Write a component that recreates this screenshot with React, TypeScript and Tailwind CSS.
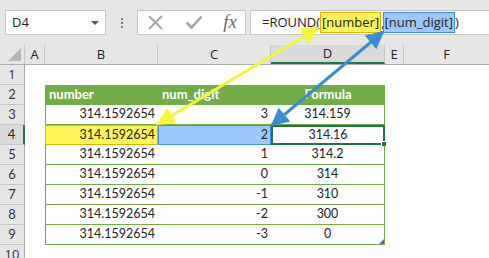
import React from 'react';

const rows = [
  { n: 3, b: '314.1592654', c: '3', d: '314.159' },
  { n: 4, b: '314.1592654', c: '2', d: '314.16' },
  { n: 5, b: '314.1592654', c: '1', d: '314.2' },
  { n: 6, b: '314.1592654', c: '0', d: '314' },
  { n: 7, b: '314.1592654', c: '-1', d: '310' },
  { n: 8, b: '314.1592654', c: '-2', d: '300' },
  { n: 9, b: '314.1592654', c: '-3', d: '0' },
];

const cols = [
  { label: 'A', w: 'w-[20px]' },
  { label: 'B', w: 'w-[113px]' },
  { label: 'C', w: 'w-[113px]' },
  { label: 'D', w: 'w-[114px]' },
  { label: 'E', w: 'w-[19px]' },
];

const RowHead: React.FC<{ n: number; active?: boolean }> = ({ n, active }) => (
  <div
    className={
      active
        ? 'w-[25px] h-full shrink-0 flex items-center justify-center bg-[#dadada] border-b border-[#c6c6c6] border-r-2 border-r-[#217346] text-[#222] text-[13px]'
        : 'w-[25px] h-full shrink-0 flex items-center justify-center bg-[#e6e6e6] border-b border-[#c6c6c6] border-r border-r-[#ababab] text-[#333] text-[13px]'
    }
  >
    {n}
  </div>
);

const App: React.FC = () => {
  return (
    <div className="relative w-[489px] h-[258px] overflow-hidden bg-white font-['Open_Sans'] text-[#222]">
      {/* formula bar */}
      <div className="h-[45px] bg-[#e6e6e6] flex items-start pt-[10px]">
        <div className="ml-[5px] w-[101px] h-[25px] bg-white border border-[#c6c6c6] flex items-center justify-between pl-[6px] pr-[6px] text-[13px]">
          <span>D4</span>
          <span className="w-0 h-0 border-l-[4px] border-r-[4px] border-t-[4px] border-l-transparent border-r-transparent border-t-[#555]" />
        </div>
        <div className="w-[31px] h-[25px] flex flex-col items-center justify-center gap-[2px]">
          <span className="w-[2px] h-[2px] bg-[#777]" />
          <span className="w-[2px] h-[2px] bg-[#777]" />
          <span className="w-[2px] h-[2px] bg-[#777]" />
        </div>
        <div className="w-[109px] h-[25px] bg-white border border-[#c6c6c6] flex items-center justify-between pl-[9px] pr-[8px]">
          <svg width="17" height="17" viewBox="0 0 17 17">
            <path d="M2 2 L15 15 M15 2 L2 15" stroke="#a6a6a6" strokeWidth="2" fill="none" />
          </svg>
          <svg width="18" height="15" viewBox="0 0 18 15">
            <path d="M1.5 7.5 L6.5 12.5 L16.5 1.5" stroke="#a6a6a6" strokeWidth="2.6" fill="none" />
          </svg>
          <span className="font-['Liberation_Serif'] italic text-[19px] leading-none text-[#6b6b6b] -mt-[3px]">fx</span>
        </div>
        <div className="ml-[4px] flex-1 h-[25px] bg-white border border-[#c6c6c6] border-r-0 flex items-center pl-[11px] text-[13px] whitespace-nowrap">
          <span>=ROUND(</span>
          <span className="h-[21px] flex items-center px-[1px] bg-[#fff35c] border border-[#e0b400]">[number]</span>
          <span className="-mr-[2px]">,</span>
          <span className="h-[21px] flex items-center px-[1px] bg-[#9ec8f8] border border-[#3f8fe8]">[num_digit]</span>
          <span>)</span>
        </div>
      </div>

      {/* column headers */}
      <div className="h-[20px] flex bg-[#e6e6e6] border-b border-[#ababab] text-[13px]">
        <div className="w-[25px] shrink-0 h-full relative border-r border-[#c6c6c6]">
          <span className="absolute right-[3px] bottom-[3px] w-0 h-0 border-b-[13px] border-l-[13px] border-l-transparent border-b-[#b5b5b5]" />
        </div>
        {cols.map((c) => (
          <div
            key={c.label}
            className={
              c.label === 'D'
                ? `${c.w} shrink-0 h-full flex items-center justify-center border-r border-[#c6c6c6] border-b-2 border-b-[#217346] bg-[#dadada]`
                : `${c.w} shrink-0 h-full flex items-center justify-center border-r border-[#c6c6c6]`
            }
          >
            {c.label}
          </div>
        ))}
        <div className="flex-1 h-full flex items-center justify-center">F</div>
      </div>

      {/* row 1 */}
      <div className="h-[20px] flex">
        <RowHead n={1} />
      </div>

      {/* row 2: table header */}
      <div className="h-[20px] flex font-['Lato'] text-[13px]">
        <RowHead n={2} />
        <div className="w-[20px] shrink-0" />
        <div className="w-[340px] shrink-0 h-full bg-[#70ad47] text-white font-bold flex items-center">
          <div className="w-[113px] pl-[4px]">number</div>
          <div className="w-[113px] pl-[4px]">num_digit</div>
          <div className="w-[114px] text-center">Formula</div>
        </div>
      </div>

      {/* data rows */}
      {rows.map((r) => {
        const sel = r.n === 4;
        return (
          <div key={r.n} className="h-[20px] flex font-['Lato'] text-[12.5px]">
            <RowHead n={r.n} active={sel} />
            <div className="w-[20px] shrink-0" />
            {sel ? (
              <>
                <div className="w-[113px] shrink-0 h-full bg-[#fff35c] border border-[#e0b400] flex items-center justify-end pr-[2px]">
                  {r.b}
                </div>
                <div className="w-[113px] shrink-0 h-full bg-[#9ec8f8] border border-[#3f8fe8] flex items-center justify-end pr-[2px]">
                  {r.c}
                </div>
                <div className="relative w-[114px] shrink-0 h-full border-2 border-[#217346] flex items-center justify-center">
                  {r.d}
                  <span className="absolute -right-[4px] -bottom-[4px] w-[6px] h-[6px] bg-[#217346] border border-white" />
                </div>
              </>
            ) : (
              <>
                <div className="w-[113px] shrink-0 h-full border-l border-b border-[#70ad47] flex items-center justify-end pr-[3px]">
                  {r.b}
                </div>
                <div className="w-[113px] shrink-0 h-full border-b border-[#70ad47] flex items-center justify-end pr-[3px]">
                  {r.c}
                </div>
                <div className="relative w-[114px] shrink-0 h-full border-b border-r border-[#70ad47] flex items-center justify-center">
                  {r.d}
                  {r.n === 9 && (
                    <span className="absolute right-0 bottom-0 w-0 h-0 border-l-[5px] border-b-[5px] border-l-transparent border-b-[#4472c4]" />
                  )}
                </div>
              </>
            )}
          </div>
        );
      })}

      {/* row 10 */}
      <div className="h-[20px] flex">
        <RowHead n={10} />
      </div>

      {/* arrows */}
      <svg className="absolute top-0 left-0 pointer-events-none" width="489" height="258" viewBox="0 0 489 258">
        <defs>
          <marker id="ya" viewBox="0 0 10 10" refX="9" refY="5" markerWidth="7" markerHeight="6" orient="auto-start-reverse" markerUnits="strokeWidth">
            <path d="M0 0 L10 5 L0 10 Z" fill="#f4f43a" />
          </marker>
          <marker id="ba" viewBox="0 0 10 10" refX="9" refY="5" markerWidth="7" markerHeight="6" orient="auto-start-reverse" markerUnits="strokeWidth">
            <path d="M0 0 L10 5 L0 10 Z" fill="#3a8ccc" />
          </marker>
        </defs>
        <line x1="158" y1="124" x2="318" y2="28" stroke="#f4f43a" strokeWidth="3" markerStart="url(#ya)" markerEnd="url(#ya)" />
        <line x1="272" y1="125" x2="383" y2="32" stroke="#3a8ccc" strokeWidth="3" markerStart="url(#ba)" markerEnd="url(#ba)" />
      </svg>
    </div>
  );
};

export default App;
